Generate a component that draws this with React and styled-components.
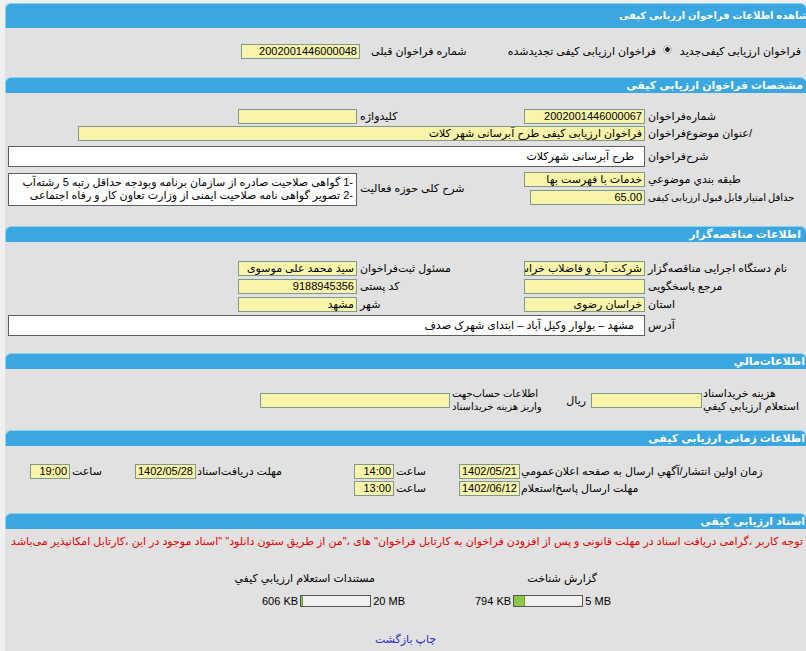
import React from "react";
import styled, { createGlobalStyle } from "styled-components";

const GlobalStyle = createGlobalStyle`
  html, body { margin: 0; padding: 0; background: #f0f0f0; overflow: hidden; }
  body {
    font-family: "Liberation Sans", "DejaVu Sans", sans-serif;
    font-size: 11px;
    color: #000;
  }
`;

const Page = styled.div`
  width: 801px;
  margin: 3px 0 0 5px;
  min-height: 648px;
  background: #e1e1e1;
  direction: rtl;
  overflow: hidden;
`;

const Bar = styled.div`
  box-sizing: border-box;
  height: ${(p) => p.$h || 16}px;
  line-height: ${(p) => (p.$h || 16) - 1}px;
  background: #3aa7e1;
  border-top: 1px solid #8fd0f2;
  border-left: 1px solid #8fd0f2;
  border-radius: 6px 6px 0 0;
  color: #fff;
  font-weight: bold;
  font-size: ${(p) => p.$fs || 11}px;
  padding-right: ${(p) => p.$pr ?? 2}px;
  text-indent: ${(p) => p.$indent || 0}px;
  white-space: nowrap;
  overflow: hidden;
`;

const TopRow = styled.div`
  display: flex;
  align-items: center;
  height: 16px;
  padding: 15px 0 18px;
`;

const Cell = styled.div`
  box-sizing: border-box;
  flex: none;
  width: ${(p) => p.$w}px;
  text-align: ${(p) => p.$align || "right"};
  padding-right: ${(p) => p.$pr || 0}px;
  padding-left: ${(p) => p.$pl || 0}px;
  white-space: nowrap;
  line-height: 13px;
`;

const RadioCell = styled.div`
  flex: none;
  width: 18px;
  display: flex;
  justify-content: center;
  align-items: center;
  margin-top: -3px;
`;

const Radio = styled.span`
  box-sizing: border-box;
  width: 9px;
  height: 9px;
  border-radius: 50%;
  border: 1px solid #a9a9a9;
  background: radial-gradient(circle, #1d1d1d 0 2px, #f6f6f6 2.6px);
`;

const Grid = styled.div`
  display: grid;
  grid-template-columns: ${(p) => p.$cols};
  grid-template-rows: ${(p) => p.$rows};
  padding: ${(p) => p.$pad};
`;

const Label = styled.div`
  grid-column: ${(p) => p.$col || "auto"};
  grid-row: ${(p) => p.$row || "auto"};
  align-self: center;
  white-space: nowrap;
  text-align: ${(p) => p.$align || "left"};
  padding-left: ${(p) => p.$pl ?? 3}px;
  padding-right: ${(p) => p.$pr || 0}px;
  font-size: ${(p) => p.$fs || 11}px;
  word-spacing: ${(p) => p.$ws || 0}px;
  line-height: 13px;
`;

const Field = styled.div`
  box-sizing: border-box;
  flex: none;
  grid-column: ${(p) => p.$col || "auto"};
  grid-row: ${(p) => p.$row || "auto"};
  justify-self: start;
  align-self: center;
  width: ${(p) => p.$w}px;
  height: 15px;
  line-height: 13px;
  padding: 0 2px;
  background: #f9f4aa;
  border: 1px solid #7d9a90;
  white-space: nowrap;
  overflow: hidden;
  text-align: right;
`;

const Memo = styled.div`
  box-sizing: border-box;
  grid-column: ${(p) => p.$col || "auto"};
  grid-row: ${(p) => p.$row || "auto"};
  align-self: ${(p) => p.$alignSelf || "center"};
  height: ${(p) => p.$h}px;
  background: #fff;
  border: 1px solid #5e5e5e;
  padding: ${(p) => p.$pad || "3px 10px 0 0"};
  line-height: 13px;
  white-space: nowrap;
  overflow: hidden;
`;

const FinRow = styled.div`
  display: flex;
  align-items: center;
  height: 28px;
  padding: 17px 0 16px;
`;

const TwoLine = styled.div`
  box-sizing: border-box;
  flex: none;
  width: ${(p) => p.$w}px;
  text-align: left;
  padding-left: ${(p) => p.$pl || 1}px;
  font-size: ${(p) => p.$fs || 11}px;
  line-height: 13px;
  white-space: nowrap;
`;

const Notice = styled.div`
  color: #e60000;
  line-height: 14px;
  padding: 5px 3px 0 0;
  white-space: nowrap;
  overflow: hidden;
`;

const DocsRow = styled.div`
  display: flex;
  gap: 70px;
  padding: 23px 195px 0 0;
`;

const DocItem = styled.div`
  width: ${(p) => p.$w}px;
  display: flex;
  flex-direction: column;
  gap: 9px;
`;

const DocLabel = styled.div`
  line-height: 14px;
  padding-right: ${(p) => p.$pr}px;
  white-space: nowrap;
`;

const Progress = styled.div`
  direction: ltr;
  display: flex;
  align-items: center;
  height: 14px;
  gap: 2px;
  white-space: nowrap;
`;

const Track = styled.div`
  box-sizing: border-box;
  width: 81px;
  height: 12px;
  border: 1px solid #565656;
  background: #f1f1f1;
  display: flex;
`;

const Fill = styled.div`
  height: 100%;
  background: #8fc641;
  border-right: 1px solid #6c9e2a;
  box-sizing: border-box;
`;

const Links = styled.div`
  text-align: center;
  line-height: 14px;
  padding: 24px 0 10px;
  color: #2a2ac4;
`;

const Link = styled.a`
  color: inherit;
  text-decoration: none;
  cursor: pointer;
`;

const COLS = "155px 121px 167px 119px 1fr";
const TIME_COLS = "286px 62px 64px 40px 158px 61px 65px 40px 1fr";

function Doc({ label, w, pr, used, total, pct }) {
  return (
    <DocItem $w={w}>
      <DocLabel $pr={pr}>{label}</DocLabel>
      <Progress>
        <span>{used}</span>
        <Track>
          <Fill style={{ width: `${pct}%` }} />
        </Track>
        <span>{total}</span>
      </Progress>
    </DocItem>
  );
}

export default function App() {
  return (
    <>
      <GlobalStyle />
      <Page>
        <Bar $h={25} $pr={0} $indent={-9} $fs={10}>
          مشاهده اطلاعات فراخوان ارزیابی کیفی
        </Bar>
        <TopRow>
          <Cell $w={130} $pr={5}>فراخوان ارزیابی کیفی‌جدید</Cell>
          <RadioCell>
            <Radio />
          </RadioCell>
          <Cell $w={190} $pr={2}>فراخوان ارزیابی کیفی تجدیدشده</Cell>
          <Cell $w={108} $align="left" $pl={11}>شماره فراخوان قبلی</Cell>
          <Field $w={119}>2002001446000048</Field>
        </TopRow>

        <Bar $pr={3}>مشخصات فراخوان ارزیابی کیفی</Bar>
        <Grid $cols={COLS} $rows="17px 17px 29px 17px 18px" $pad="15px 6px 20px 3px">
          <Label $col="1" $row="1">شماره‌فراخوان</Label>
          <Field $col="2" $row="1" $w={121}>2002001446000067</Field>
          <Label $col="3" $row="1">کلیدواژه</Label>
          <Field $col="4" $row="1" $w={119} />

          <Label $col="1" $row="2">/عنوان  موضوع‌فراخوان</Label>
          <Field $col="2 / -1" $row="2" $w={567}>
            فراخوان ارزیابی کیفی طرح آبرسانی شهر کلات
          </Field>

          <Label $col="1" $row="3">شرح‌فراخوان</Label>
          <Memo $col="2 / -1" $row="3" $h={21}>طرح آبرسانی شهرکلات</Memo>

          <Label $col="1" $row="4">طبقه بندي موضوعي</Label>
          <Field $col="2" $row="4" $w={121}>خدمات با فهرست بها</Field>
          <Label $col="3" $row="4 / 6">شرح کلی حوزه فعالیت</Label>
          <Memo $col="4 / 6" $row="4 / 6" $h={33} $alignSelf="end" $pad="2px 3px 0 0">
            -1 گواهی صلاحیت صادره از سازمان برنامه وبودجه حداقل رتبه 5 رشته‌آب
            <br />
            -2 تصویر گواهی نامه صلاحیت ایمنی از وزارت تعاون کار و رفاه اجتماعی
          </Memo>

          <Label $col="1" $row="5" $fs={10} $ws={-1}>
            حداقل امتیاز قابل قبول ارزیابی کیفی
          </Label>
          <Field $col="2" $row="5" $w={115}>65.00</Field>
        </Grid>

        <Bar $pr={5}>اطلاعات مناقصه‌گزار</Bar>
        <Grid $cols={COLS} $rows="18px 18px 18px 25px" $pad="17px 6px 15px 3px">
          <Label $col="1" $row="1">نام دستگاه اجرایی مناقصه‌گزار</Label>
          <Field $col="2" $row="1" $w={121}>شرکت آب و فاضلاب خراسان رضوی</Field>
          <Label $col="3" $row="1">مسئول ثبت‌فراخوان</Label>
          <Field $col="4" $row="1" $w={119}>سید محمد علی موسوی</Field>

          <Label $col="1" $row="2">مرجع پاسخگویی</Label>
          <Field $col="2" $row="2" $w={121} />
          <Label $col="3" $row="2">کد پستی</Label>
          <Field $col="4" $row="2" $w={119}>9188945356</Field>

          <Label $col="1" $row="3">استان</Label>
          <Field $col="2" $row="3" $w={121}>خراسان رضوی</Field>
          <Label $col="3" $row="3">شهر</Label>
          <Field $col="4" $row="3" $w={119}>مشهد</Field>

          <Label $col="1" $row="4">آدرس</Label>
          <Memo $col="2 / -1" $row="4" $h={21}>
            مشهد – بولوار وکیل آباد – ابتدای شهرک صدف
          </Memo>
        </Grid>

        <Bar $pr={1}>اطلاعات‌مالي</Bar>
        <FinRow>
          <TwoLine $w={104}>
            هزینه خرید‌اسناد
            <br />
            استعلام ارزیابي کیفي
          </TwoLine>
          <Field $w={111}>{""}</Field>
          <Cell $w={40} $pr={5}>ریال</Cell>
          <TwoLine $w={101} $fs={10} $pl={2}>
            اطلاعات حساب‌جهت
            <br />
            واریز هزینه خرید‌اسناد
          </TwoLine>
          <Field $w={190} />
        </FinRow>

        <Bar $pr={1}>اطلاعات زمانی ارزیابی کیفی</Bar>
        <Grid $cols={TIME_COLS} $rows="17px 17px" $pad="17px 0 16px 0">
          <Label $col="1" $row="1" $pl={1}>
            زمان اولین انتشار/آگهي ارسال به صفحه اعلان‌عمومي
          </Label>
          <Field $col="2" $row="1" $w={61}>1402/05/21</Field>
          <Label $col="3" $row="1" $pl={2}>ساعت</Label>
          <Field $col="4" $row="1" $w={40}>14:00</Field>
          <Label $col="5" $row="1" $pl={1}>مهلت دریافت‌اسناد</Label>
          <Field $col="6" $row="1" $w={61}>1402/05/28</Field>
          <Label $col="7" $row="1" $pl={2}>ساعت</Label>
          <Field $col="8" $row="1" $w={40}>19:00</Field>

          <Label $col="1" $row="2" $pl={1}>مهلت ارسال پاسخ‌استعلام</Label>
          <Field $col="2" $row="2" $w={61}>1402/06/12</Field>
          <Label $col="3" $row="2" $pl={2}>ساعت</Label>
          <Field $col="4" $row="2" $w={40}>13:00</Field>
        </Grid>

        <Bar $pr={1}>اسناد ارزیابی کیفی</Bar>
        <Notice>
          توجه کاربر ،گرامی دریافت اسناد در مهلت قانونی و پس از افزودن فراخوان به کارتابل فراخوان" های ،"من از طریق ستون دانلود" "اسناد موجود در این ،کارتابل امکانپذیر می‌باشد
        </Notice>
        <DocsRow>
          <Doc label="گزارش شناخت" w={136} pr={14} used="794 KB" total="5 MB" pct={15.5} />
          <Doc label="مستندات استعلام ارزیابي کیفي" w={143} pr={30} used="606 KB" total="20 MB" pct={3} />
        </DocsRow>
        <Links>
          <Link>چاپ</Link> <Link>بازگشت</Link>
        </Links>
      </Page>
    </>
  );
}
